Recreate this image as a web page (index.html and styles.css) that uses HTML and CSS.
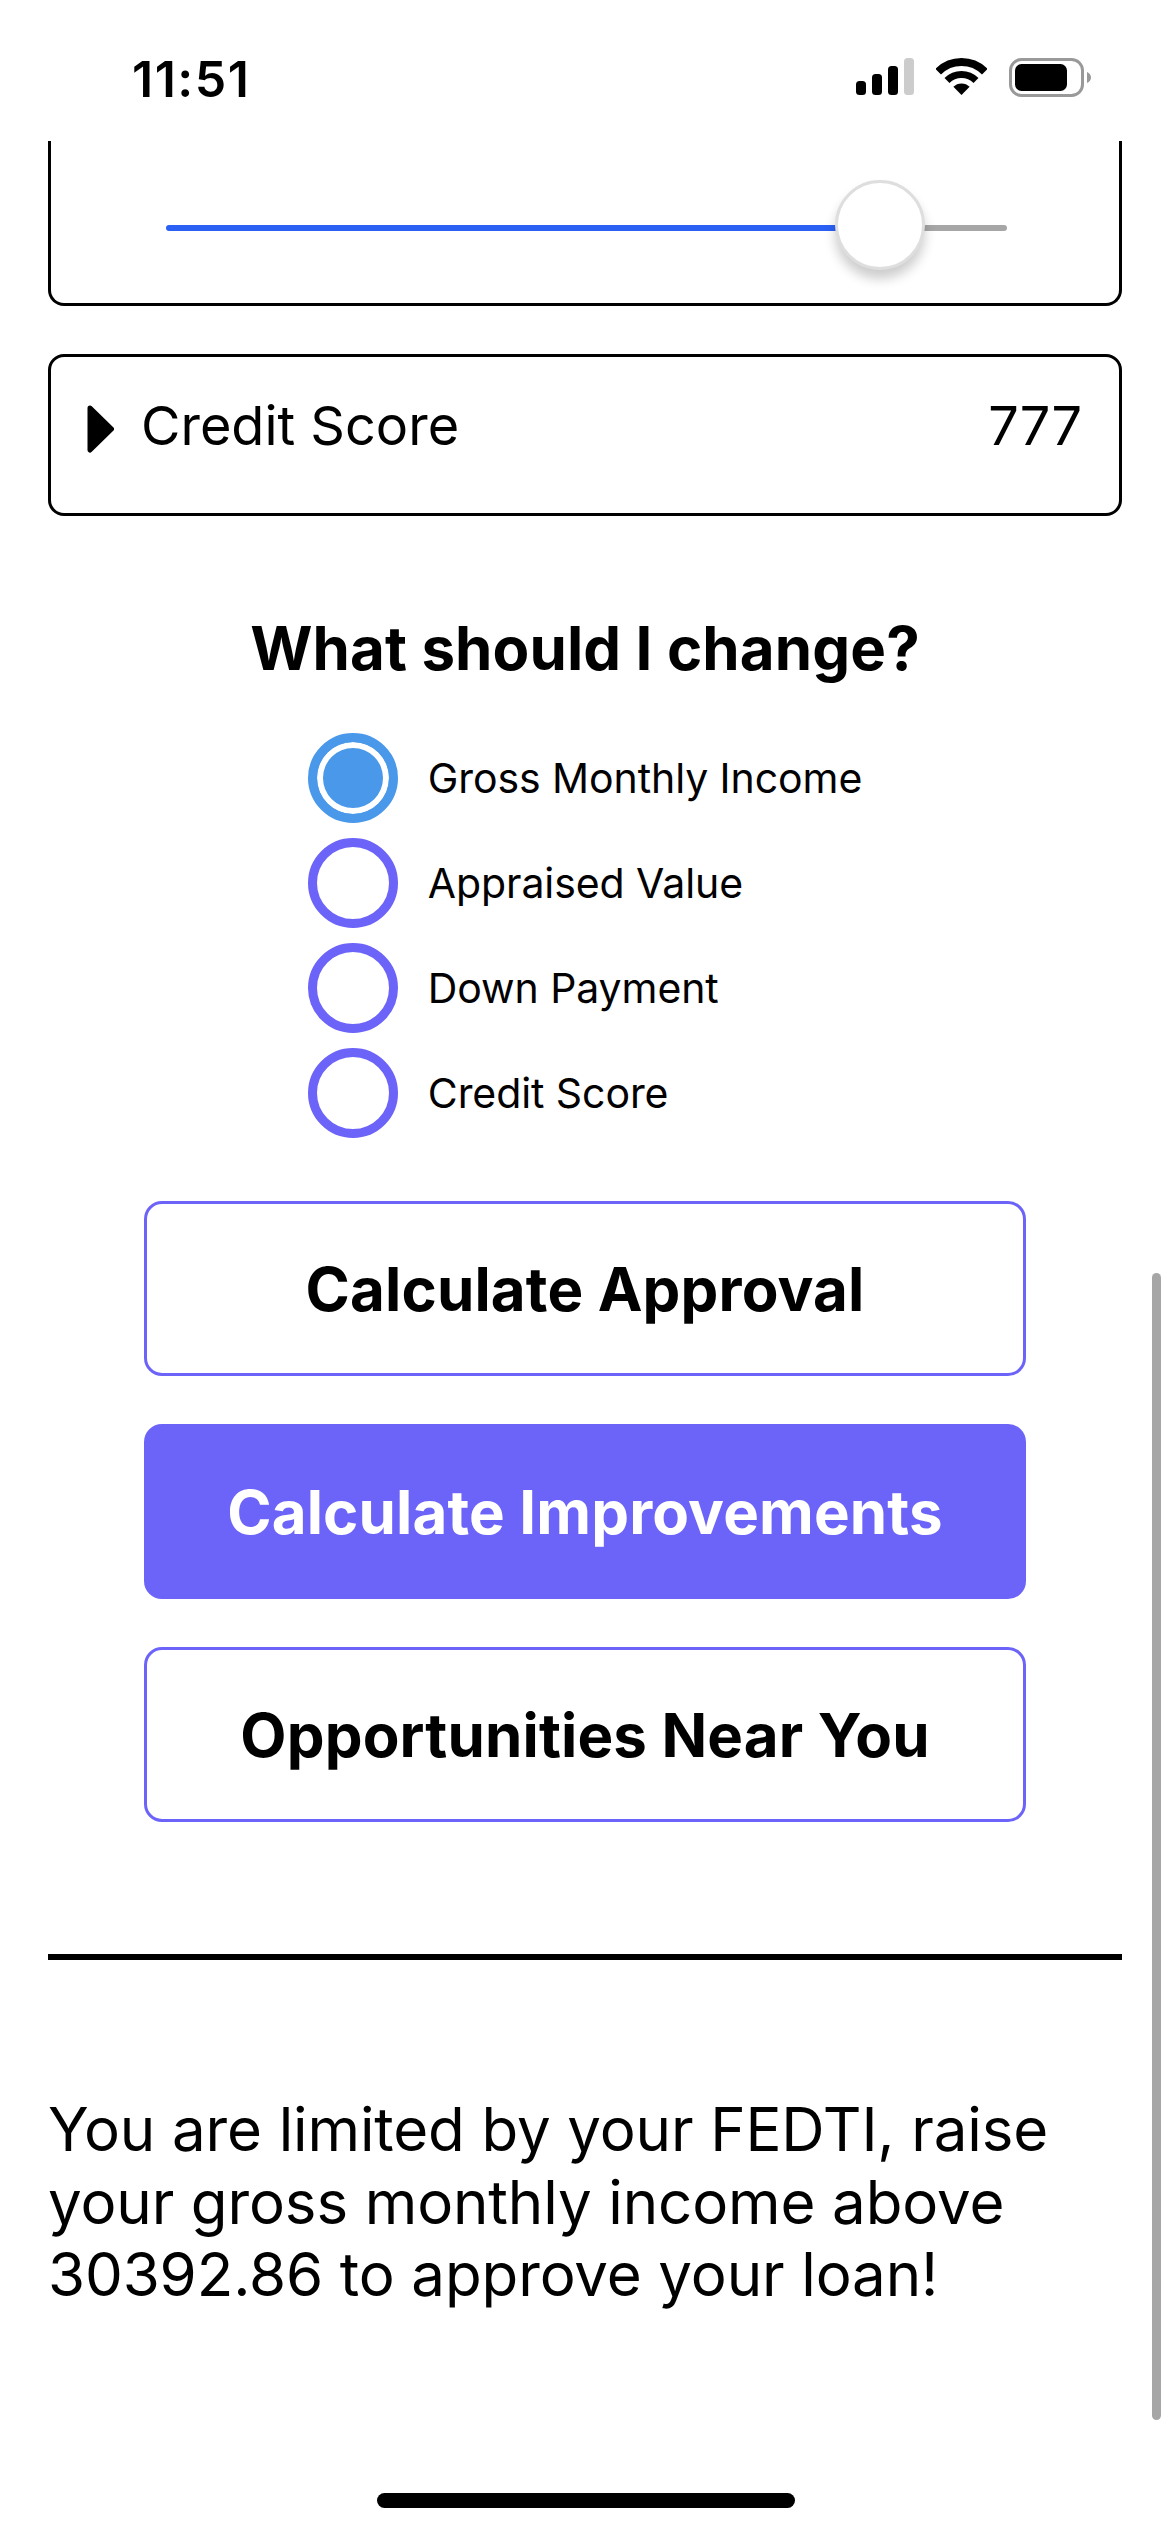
FILE: index.html
```html
<!DOCTYPE html>
<html lang="en">
<head>
    <meta charset="UTF-8">
    <meta name="viewport" content="width=device-width, initial-scale=1.0">
    <title>Loan Calculator</title>
    <link rel="stylesheet" href="styles.css">
</head>
<body>
    <header class="status-bar">
        <span class="status-time">11:51</span>
        <div class="status-icons">
            <svg class="icon-signal" width="58" height="37" viewBox="0 0 58 37">
                <rect x="0" y="23" width="10" height="14" rx="3.5" fill="#000"/>
                <rect x="16" y="16" width="10" height="21" rx="3.5" fill="#000"/>
                <rect x="32" y="8" width="10" height="29" rx="3.5" fill="#000"/>
                <rect x="48" y="0" width="10" height="37" rx="3.5" fill="#ccc"/>
            </svg>
            <svg class="icon-wifi" width="51" height="37" viewBox="0 0 51 37">
                <path d="M2.17 13.67A33 33 0 0 1 48.83 13.67" fill="none" stroke="#000" stroke-width="8"/>
                <path d="M11 22.5A20.5 20.5 0 0 1 40 22.5" fill="none" stroke="#000" stroke-width="7"/>
                <path d="M25.5 37L17.37 28.87A11.5 11.5 0 0 1 33.63 28.87Z" fill="#000"/>
            </svg>
            <svg class="icon-battery" width="82" height="39" viewBox="0 0 82 39">
                <rect x="1.5" y="1.5" width="72" height="36" rx="11" fill="none" stroke="#999" stroke-width="3"/>
                <rect x="6" y="6" width="52" height="27" rx="6.5" fill="#000"/>
                <path d="M78 14C80.5 15 82 17 82 19.5C82 22 80.5 24 78 25Z" fill="#999"/>
            </svg>
        </div>
    </header>

    <main class="screen">
        <div class="card card-slider">
            <div class="slider">
                <div class="slider-fill"></div>
                <div class="slider-rest"></div>
                <div class="slider-thumb"></div>
            </div>
        </div>

        <div class="card card-row">
            <svg class="caret" width="27" height="48" viewBox="0 0 27 48">
                <polygon points="3,3 24.5,24 3,45" fill="#000" stroke="#000" stroke-width="5" stroke-linejoin="round"/>
            </svg>
            <span class="row-label">Credit Score</span>
            <span class="row-value">777</span>
        </div>

        <h2 class="section-title">What should I change?</h2>

        <div class="radio-group">
            <div class="radio-row">
                <span class="radio radio-on"></span>
                <span class="radio-label">Gross Monthly Income</span>
            </div>
            <div class="radio-row">
                <span class="radio"></span>
                <span class="radio-label">Appraised Value</span>
            </div>
            <div class="radio-row">
                <span class="radio"></span>
                <span class="radio-label">Down Payment</span>
            </div>
            <div class="radio-row">
                <span class="radio"></span>
                <span class="radio-label">Credit Score</span>
            </div>
        </div>

        <div class="actions">
            <button class="button" type="button">Calculate Approval</button>
            <button class="button button-primary" type="button">Calculate Improvements</button>
            <button class="button" type="button">Opportunities Near You</button>
        </div>

        <hr class="divider">

        <p class="result">You are limited by your FEDTI, raise your gross monthly income above 30392.86 to approve your loan!</p>
    </main>

    <div class="scrollbar"></div>
    <div class="home-indicator"></div>
</body>
</html>
```

FILE: styles.css
```css
* {
    box-sizing: border-box;
}

html,
body {
    margin: 0;
    padding: 0;
}

body {
    position: relative;
    width: 1170px;
    height: 2532px;
    overflow: hidden;
    background-color: #fff;
    color: #000;
    font-family: Inter, sans-serif;
}

.status-bar {
    display: flex;
    align-items: flex-start;
    justify-content: space-between;
    height: 141px;
    padding: 50px 79px 0 132px;
}

.status-time {
    font-size: 50px;
    font-weight: 600;
    letter-spacing: 1.5px;
    line-height: 58px;
}

.status-icons {
    display: flex;
    align-items: flex-start;
    gap: 22px;
    padding-top: 8px;
}

.screen {
    display: flex;
    flex-direction: column;
    padding: 0 48px;
}

.card {
    border: 3px solid #000;
    border-radius: 16px;
}

.card-slider {
    height: 165px;
    padding: 84px 112px 0 115px;
    border-top: none;
    border-top-left-radius: 0;
    border-top-right-radius: 0;
}

.slider {
    position: relative;
    display: flex;
    height: 6px;
}

.slider-fill {
    width: 700px;
    background-color: #2b60f5;
    border-radius: 3px 0 0 3px;
}

.slider-rest {
    flex: 1;
    background-color: #a6a6a6;
    border-radius: 0 3px 3px 0;
}

.slider-thumb {
    position: absolute;
    left: 669px;
    top: -45px;
    width: 90px;
    height: 90px;
    background-color: #fff;
    border: 3px solid #dedede;
    border-radius: 50%;
    box-shadow: 0 9px 12px rgba(0, 0, 0, 0.2);
}

.card-row {
    display: flex;
    align-items: center;
    height: 162px;
    margin-top: 48px;
    padding: 0 37px 20px 36px;
}

.caret {
    margin: 8px 27px 0 0;
}

.row-label {
    flex: 1;
    font-size: 54px;
}

.row-value {
    font-size: 54px;
}

.section-title {
    margin: 96px 0 0;
    font-size: 60px;
    font-weight: 700;
    letter-spacing: 0.12px;
    line-height: 72px;
    text-align: center;
}

.radio-group {
    display: flex;
    flex-direction: column;
    align-self: center;
    gap: 15px;
    margin-top: 49px;
}

.radio-row {
    display: flex;
    align-items: center;
    gap: 30px;
}

.radio {
    width: 90px;
    height: 90px;
    border: 9px solid #6c63f8;
    border-radius: 50%;
}

.radio-on {
    border-color: #4a98ea;
    background-color: #4a98ea;
    box-shadow: inset 0 0 0 6px #fff;
}

.radio-label {
    font-size: 41px;
    letter-spacing: -0.08px;
}

.actions {
    display: flex;
    flex-direction: column;
    align-items: center;
    gap: 48px;
    margin-top: 63px;
}

.button {
    width: 882px;
    height: 175px;
    border: 3px solid #6c63f8;
    border-radius: 18px;
    background-color: #fff;
    color: #000;
    font-family: Inter, sans-serif;
    font-size: 60px;
    font-weight: 700;
    letter-spacing: 0.15px;
}

.button.button-primary {
    background-color: #6c63f8;
    color: #fff;
}

.divider {
    height: 6px;
    margin: 132px 0 0;
    border: none;
    background-color: #000;
}

.result {
    margin: 133px 0 0;
    font-size: 60px;
    letter-spacing: -0.12px;
    line-height: 72.6px;
}

.scrollbar {
    position: absolute;
    left: 1152px;
    top: 1273px;
    width: 9px;
    height: 1147px;
    background-color: #a6a6a6;
    border-radius: 5px;
}

.home-indicator {
    position: absolute;
    left: 377px;
    top: 2493px;
    width: 418px;
    height: 15px;
    background-color: #000;
    border-radius: 8px;
}
```
